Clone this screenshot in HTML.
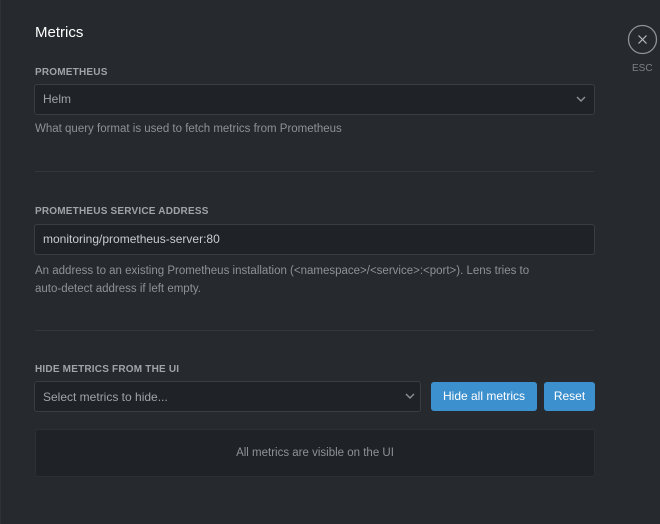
<!DOCTYPE html><html><head><style>
body{margin:0;width:660px;height:524px;background:#262a2e;font-family:"Liberation Sans",sans-serif;position:relative;overflow:hidden;color:#8e9297}
.a{position:absolute}
.lbl{font-size:10px;font-weight:bold;color:#a0a4a8;left:35px;letter-spacing:0.2px}
.box{background:#1f2226;border:1px solid #3a3e43;border-radius:3px;box-sizing:border-box}
.d{font-size:11.5px;color:#8e9297;left:35px;line-height:18px}
.hr{left:35px;width:559px;height:1px;background:#33373c}
.btn{background:#3d90ce;color:#fff;font-size:12px;border-radius:3px;text-align:center;line-height:29px}
</style></head><body>
<div class="a" style="left:0;top:0;width:1px;height:524px;background:#2e3236"></div>
<div class="a" style="left:35px;top:24px;font-size:15px;color:#fff">Metrics</div>
<div class="a lbl" style="top:67px">PROMETHEUS</div>
<div class="a box" style="left:34px;top:84px;width:561px;height:31px"></div>
<div class="a" style="left:43px;top:92px;font-size:12px;color:#a0a4a8">Helm</div>
<svg class="a" style="left:576px;top:96px" width="10" height="7"><path d="M1 1L5 5L9 1" stroke="#8e9297" stroke-width="1.4" fill="none"/></svg>
<div class="a d" style="top:120px">What query format is used to fetch metrics from Prometheus</div>
<div class="a hr" style="top:171px"></div>
<div class="a lbl" style="top:206px">PROMETHEUS SERVICE ADDRESS</div>
<div class="a box" style="left:34px;top:224px;width:561px;height:31px"></div>
<div class="a" style="left:43px;top:232px;font-size:12px;color:#c8ccd0">monitoring/prometheus-server:80</div>
<div class="a d" style="top:262px;width:520px">An address to an existing Prometheus installation (&lt;namespace&gt;/&lt;service&gt;:&lt;port&gt;). Lens tries to auto-detect address if left empty.</div>
<div class="a hr" style="top:330px"></div>
<div class="a lbl" style="top:364px">HIDE METRICS FROM THE UI</div>
<div class="a box" style="left:34px;top:381px;width:387px;height:31px"></div>
<div class="a" style="left:43px;top:390px;font-size:12px;color:#a0a4a8">Select metrics to hide...</div>
<svg class="a" style="left:405px;top:393px" width="10" height="7"><path d="M1 1L5 5L9 1" stroke="#8e9297" stroke-width="1.4" fill="none"/></svg>
<div class="a btn" style="left:431px;top:382px;width:106px;height:29px">Hide all metrics</div>
<div class="a btn" style="left:544px;top:382px;width:51px;height:29px">Reset</div>
<div class="a box" style="left:35px;top:429px;width:560px;height:48px;border-color:#2c3035;text-align:center;line-height:46px;font-size:11.5px;color:#8e9297">All metrics are visible on the UI</div>
<svg class="a" style="left:627px;top:24px" width="31" height="31"><circle cx="15.5" cy="15.5" r="14" stroke="#8e9297" stroke-width="1.3" fill="none"/><path d="M11.5 11.5L19.5 19.5M19.5 11.5L11.5 19.5" stroke="#b8bcc0" stroke-width="1.2"/></svg>
<div class="a" style="left:632px;top:63px;font-size:10px;color:#7d8186">ESC</div>
</body></html>
